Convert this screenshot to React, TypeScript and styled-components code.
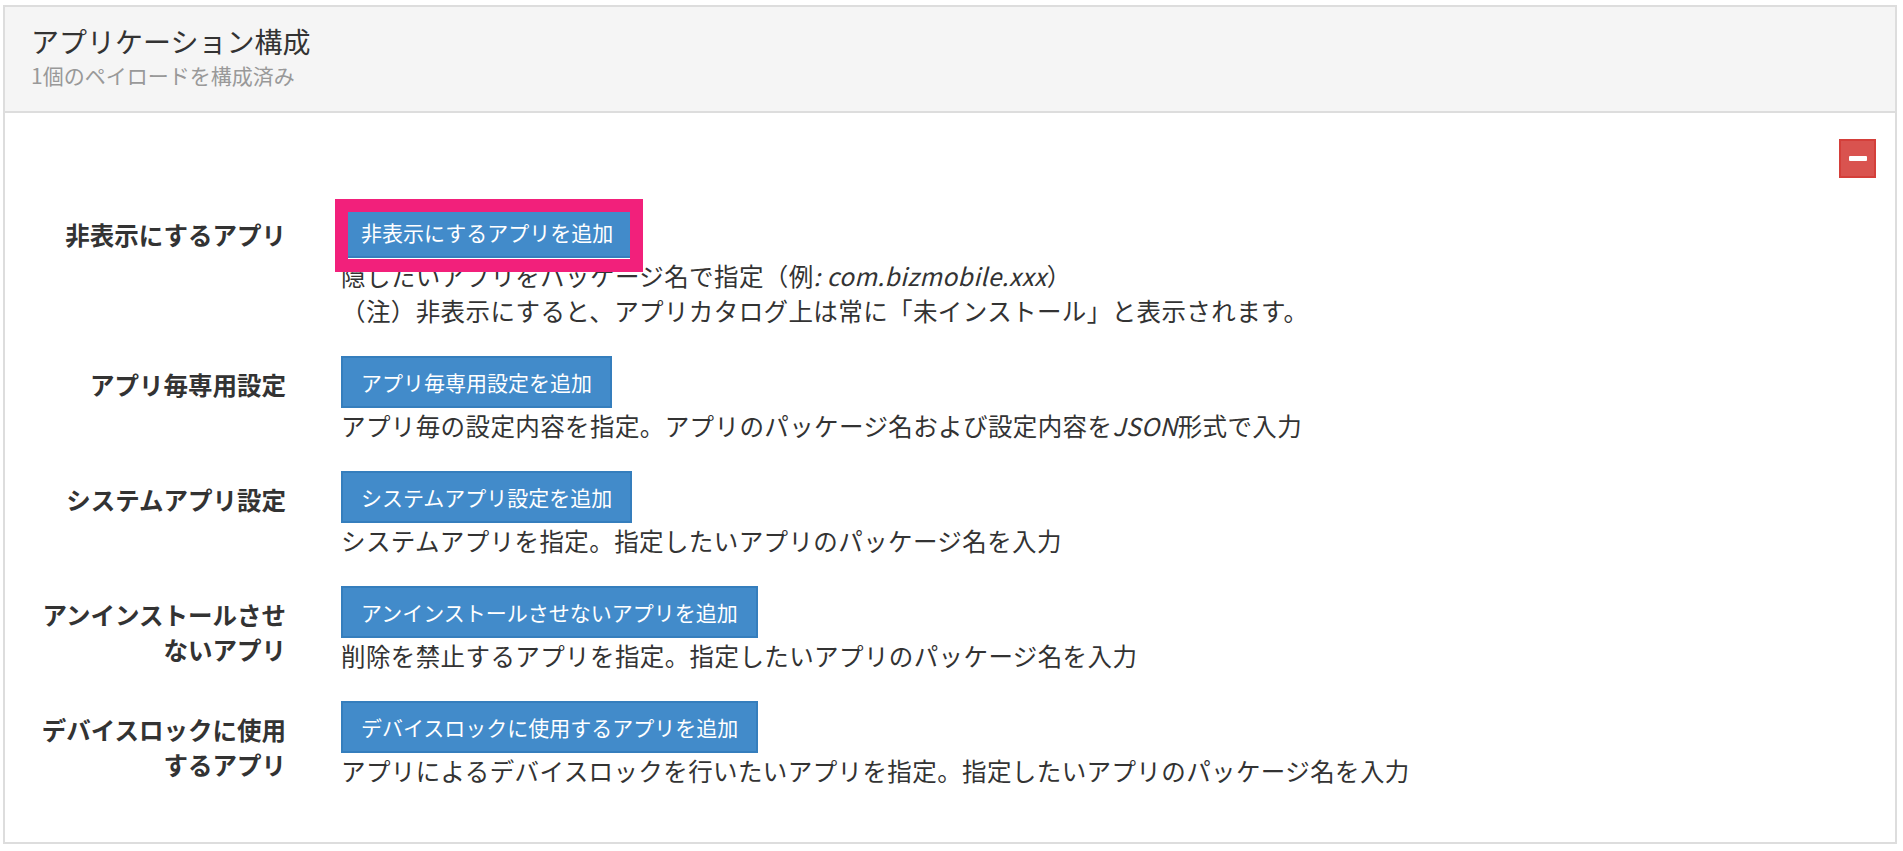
import React from "react"
import styled, {createGlobalStyle} from "styled-components"

const GlobalStyle = createGlobalStyle`
  html, body {
    margin: 0;
    padding: 0;
    background: #fff;
  }
  body {
    font-family: "Noto Sans CJK JP", "Noto Sans", sans-serif;
    color: #333;
  }
`

type Row = {
  label: string[]
  button: string
  help: React.ReactNode[]
  marked?: boolean
}

const rows: Row[] = [
  {
    label: ["非表示にするアプリ"],
    button: "非表示にするアプリを追加",
    help: [
      <>隠したいアプリをパッケージ名で指定（例<i>: com.bizmobile.xxx</i>）</>,
      <>（注）非表示にすると、アプリカタログ上は常に「未インストール」と表示されます。</>
    ],
    marked: true
  },
  {
    label: ["アプリ毎専用設定"],
    button: "アプリ毎専用設定を追加",
    help: [<>アプリ毎の設定内容を指定。アプリのパッケージ名および設定内容を<i>JSON</i>形式で入力</>]
  },
  {
    label: ["システムアプリ設定"],
    button: "システムアプリ設定を追加",
    help: [<>システムアプリを指定。指定したいアプリのパッケージ名を入力</>]
  },
  {
    label: ["アンインストールさせ", "ないアプリ"],
    button: "アンインストールさせないアプリを追加",
    help: [<>削除を禁止するアプリを指定。指定したいアプリのパッケージ名を入力</>]
  },
  {
    label: ["デバイスロックに使用", "するアプリ"],
    button: "デバイスロックに使用するアプリを追加",
    help: [<>アプリによるデバイスロックを行いたいアプリを指定。指定したいアプリのパッケージ名を入力</>]
  }
]

export default function App() {
  return (
    <>
      <GlobalStyle />
      <Panel>
        <Heading>
          <Title>アプリケーション構成</Title>
          <Subtitle>1個のペイロードを構成済み</Subtitle>
        </Heading>
        <Body>
          <Tools>
            <RemoveButton aria-label="削除">
              <Dash />
            </RemoveButton>
          </Tools>
          {rows.map((row) => (
            <FormGroup key={row.button}>
              <Label>
                {row.label.map((line) => (
                  <span key={line}>{line}</span>
                ))}
              </Label>
              <Control>
                <ButtonWrap>
                  <AddButton>{row.button}</AddButton>
                  {row.marked && <Marker />}
                </ButtonWrap>
                {row.help.map((line, i) => (
                  <Help key={i}>{line}</Help>
                ))}
              </Control>
            </FormGroup>
          ))}
        </Body>
      </Panel>
    </>
  )
}

const Panel = styled.div`
  margin: 5px 6px 0 3px;
  border: 2px solid #dddddd;
  background: #fff;
`

const Heading = styled.div`
  background: #f5f5f5;
  border-bottom: 2px solid #dddddd;
  padding: 18px 26px 21px;
`

const Title = styled.div`
  font-size: 28px;
  line-height: 32px;
  color: #333;
`

const Subtitle = styled.div`
  margin-top: 3px;
  font-size: 21px;
  line-height: 30px;
  color: #999;
`

const Body = styled.div`
  padding: 26px 19px 26px 26px;
`

const Tools = styled.div`
  display: flex;
  justify-content: flex-end;
  margin-bottom: 28px;
`

const RemoveButton = styled.button`
  width: 37px;
  height: 39px;
  padding: 0;
  display: flex;
  align-items: center;
  justify-content: center;
  background: #d9534f;
  border: 2px solid #d43f3a;
  border-radius: 0;
  cursor: pointer;
`

const Dash = styled.span`
  display: block;
  width: 18px;
  height: 5px;
  border-radius: 1px;
  background: #fff;
`

const FormGroup = styled.div`
  display: grid;
  grid-template-columns: 255px 1fr;
  column-gap: 55px;
  margin-bottom: 28px;
`

const Label = styled.div`
  display: flex;
  flex-direction: column;
  align-items: flex-end;
  padding-top: 11px;
  font-size: 24.5px;
  line-height: 35px;
  font-weight: 700;
  color: #333;
  text-align: right;
`

const Control = styled.div`
  display: flex;
  flex-direction: column;
  align-items: flex-start;
`

const ButtonWrap = styled.div`
  position: relative;
  display: inline-flex;
`

const AddButton = styled.button`
  font-family: inherit;
  font-size: 21px;
  line-height: 32px;
  padding: 8px 18px;
  color: #fff;
  background: #428bca;
  border: 2px solid #357ebd;
  border-radius: 0;
  white-space: nowrap;
  cursor: pointer;
`

const Marker = styled.span`
  position: absolute;
  top: -7px;
  left: -6px;
  right: -10px;
  bottom: -14px;
  border: 13px solid #f2207b;
  pointer-events: none;
`

const Help = styled.div`
  font-size: 24.5px;
  line-height: 35px;
  letter-spacing: 0.4px;
  color: #333;
  white-space: nowrap;

  i {
    font-style: italic;
  }
`
